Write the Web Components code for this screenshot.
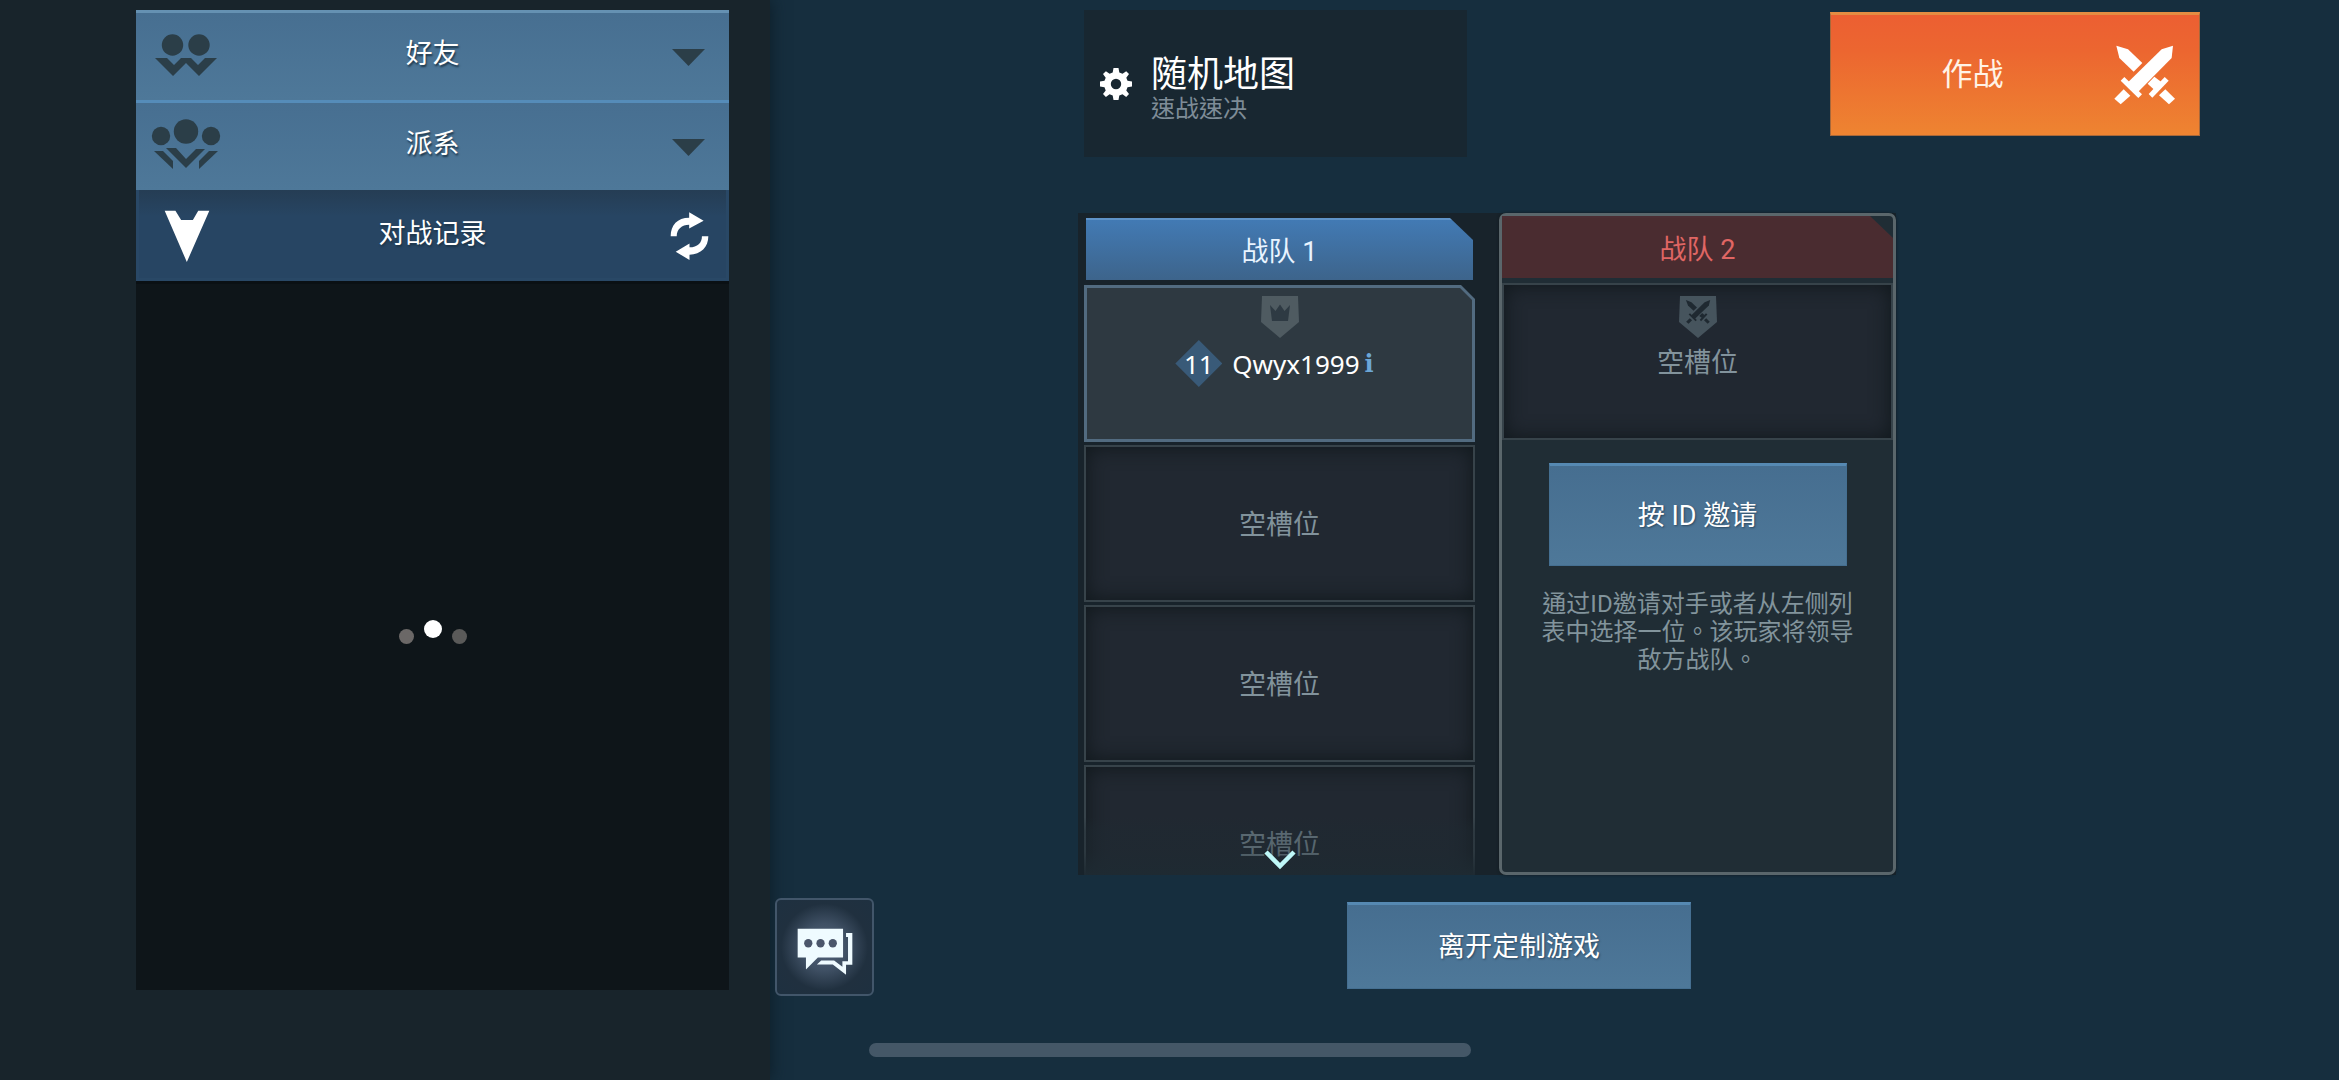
<!DOCTYPE html>
<html lang="zh-Hant">
<head>
<meta charset="utf-8">
<title>定制游戏</title>
<style>
html, body { margin: 0; height: 100%; }
body { background: #162e3e; color: #fff; font-family: Roboto, "Noto Sans CJK TC", sans-serif; font-size: 27px; line-height: 36px; overflow: hidden; }
</style>
</head>
<body>
<lobby-app></lobby-app>
<script>
const icons = {
  friends: ['17 28 68 44', 68, '<circle cx="37.5" cy="40" r="10.7"/><circle cx="64" cy="40" r="10.7"/><path d="M20 53H32L39 60L46 53H56L63 60L70 53H82L64 71L51 58L38 71Z"/>'],
  clan: ['16 113 70 51', 70, '<circle cx="26" cy="130" r="9.2"/><circle cx="51" cy="125.500" r="12.200"/><circle cx="76" cy="130" r="9.2"/><path d="M31 142H41L51 153L61 143H70L51 162Z"/><path d="M19 145H28L38 155V163Z"/><path d="M83 145H74L64 155V163Z"/>'],
  arrow: ['86 620 137 157', 46, '<path d="M88 622H120L137 650H172L188 622H221L154 775Z"/>'],
  refresh: ['60 66 116 144', 39, '<path d="M62 138C62 105 82 83 117 83V67L160 92L117 115V104C95 104 80 118 80 138Z"/><path d="M174 138C174 170 152 192 118 193V209L77 184L118 160V171C142 171 155 158 155 138Z"/>'],
  down: ['0 0 33 17', 33, '<path d="M0 0H33L16.500 17Z"/>'],
  swords: ['56 45 183 179', 61, '<path d="M233 47L229 84L128 186L98 157L199 58Z"/><path d="M76 152L87 141L140 193L129 204Z"/><path d="M85 178L105 197L76 223L57 206Z"/><path d="M63 47L98 58L141 99L115 125L72 84Z"/><path d="M208 141L220 152L171 203L160 192Z"/><path d="M157 161L177 140L203 160L180 182Z"/><path d="M210 178L239 206L221 223L191 196Z"/>'],
  gear: ['0 0 32 32', 32, '<path fill-rule="evenodd" d="M13.500 0H18.500L19.300 4.500L22.500 5.800L26.200 3.200L29 6L26.300 9.700L27.500 12.800L32 13.500V18.500L27.500 19.300L26.300 22.400L29 26L26.200 29L22.500 26.300L19.300 27.500L18.500 32H13.500L12.700 27.500L9.600 26.300L5.900 29L3 26L5.700 22.400L4.500 19.300L0 18.500V13.500L4.500 12.800L5.700 9.700L3 6L5.900 3.200L9.600 5.800L12.700 4.500ZM16 10.800A5.200 5.200 0 1 0 16 21.200A5.200 5.200 0 1 0 16 10.800Z"/>'],
  chat: ['110 135 169 143', 56, '<path d="M112 137H249V224H173L137 260V224H112Z"/><path d="M258 150H277V246H258V276L218 245H170L183 233H222L247 252V235H264V162H258Z"/><g fill="#4b566b"><circle cx="144" cy="181" r="12.500"/><circle cx="181" cy="181" r="12.500"/><circle cx="218" cy="181" r="12.500"/></g>'],
  chevron: ['0 0 32 20', 32, '<path d="M2 2L16 16L30 2" fill="none" stroke="#bff8f8" stroke-width="4.500"/>'],
  crown: ['0 0 40 43', 40, '<path d="M2 0H38L39 26L20 42L1 26Z"/><path fill="#2e3a43" d="M10 9L15.500 15L20 8.500L24.500 15L30 9L28 25H12Z"/>'],
  duel: ['0 0 40 43', 40, '<path d="M2 0H38L39 26L20 42L1 26Z"/><g fill="#1f2931" transform="translate(.500 -1.500) scale(.132)"><path d="M240 42L230 83L125 183L98 157L198 58Z"/><path d="M77 151L87 142L139 193L129 203Z"/><path d="M85 180L103 196L76 222L58 206Z"/><path d="M56 42L98 58L140 99L114 124L72 84Z"/><path d="M208 142L219 152L171 202L161 192Z"/><path d="M157 162L179 140L199 157L178 178Z"/><path d="M210 180L237 206L221 222L193 196Z"/></g>']
};

function define(name, css, html) {
  customElements.define(name, class extends HTMLElement {
    constructor() {
      super();
      this.attachShadow({ mode: 'open' }).innerHTML = `<style>
        * { box-sizing: border-box; }
        button { margin: 0; padding: 0; border: 0; font: inherit; color: inherit; background: none; cursor: pointer; }
        ${css}</style>${html}`;
    }
  });
}

customElements.define('game-icon', class extends HTMLElement {
  connectedCallback() {
    if (this.shadowRoot) return;
    const [box, width, shape] = icons[this.getAttribute('name')];
    this.attachShadow({ mode: 'open' }).innerHTML =
      `<style>:host{display:block;flex:none} svg{display:block;fill:currentColor}</style>
       <svg width="${width}" viewBox="${box}" aria-hidden="true">${shape}</svg>`;
  }
});

define('side-row', `
  :host { display: block; }
  button { display: grid; grid-template-columns: 100px 1fr 100px; align-items: center; width: 100%; height: 90px;
    background: linear-gradient(#476f91, #4e7899); border-top: 3px solid #558cb9; text-shadow: 1px 2px 2px #1d3548; }
  :host([first]) button { border-top-color: #6591b2; }
  :host([open]) button { height: 91px; border: 3px solid #294866; border-top: 0; background: linear-gradient(#253d54, #274563 30%, #274563); }
  ::slotted([slot=lead]) { justify-self: center; color: #2b3e48; margin-bottom: 4px; }
  ::slotted([slot=end]) { justify-self: center; color: #2b3e48; margin-left: 18px; margin-top: 2px; }
  :host([open]) ::slotted(game-icon) { color: #fff; margin-top: 5px; margin-bottom: 0; }
  :host([open]) ::slotted([slot=lead]) { margin-right: 4px; }
  :host([open]) ::slotted([slot=end]) { margin-left: 26px; }
  span { margin-bottom: 6px; }
  :host([open]) span { margin-bottom: 0; }
`, '<button type="button"><slot name="lead"></slot><span><slot></slot></span><slot name="end"></slot></button>');

define('loading-dots', `
  :host { display: flex; gap: 10px; align-items: center; justify-content: center; }
  i { width: 15px; height: 15px; border-radius: 50%; background: #6b6867; margin-top: 14px; }
  i:nth-of-type(2) { width: 18px; height: 18px; background: #fff; margin-top: 0; }
  i:nth-of-type(3) { background: #5a5a59; }
`, '<i></i><i></i><i></i>');

define('social-panel', `
  :host { display: flex; flex-direction: column; flex: 0 0 770px; padding: 10px 41px 90px 136px; background: #18242b; box-shadow: 0 0 16px #0c1c26; }
  .list { flex: 1; display: grid; place-items: center; background: #0e1519; padding-bottom: 16px; border-top: 3px solid #0a1014; }
`, `
  <side-row first><game-icon slot="lead" name="friends"></game-icon>好友<game-icon slot="end" name="down"></game-icon></side-row>
  <side-row><game-icon slot="lead" name="clan"></game-icon>派系<game-icon slot="end" name="down"></game-icon></side-row>
  <side-row open><game-icon slot="lead" name="arrow"></game-icon>对战记录<game-icon slot="end" name="refresh"></game-icon></side-row>
  <div class="list"><loading-dots></loading-dots></div>`);

define('map-card', `
  :host { display: block; width: 383px; height: 147px; }
  button { display: flex; align-items: center; gap: 19px; width: 100%; height: 100%; padding: 0 16px; background: #182731; text-align: left; }
  span { padding-top: 10px; }
  strong, small { display: block; font-weight: 400; }
  strong { font-size: 36px; line-height: 40px; }
  small { font-size: 24px; line-height: 28px; color: #7e8c97; }
`, '<button type="button"><game-icon name="gear"></game-icon><span><strong>随机地图</strong><small>速战速决</small></span></button>');

define('battle-button', `
  :host { display: block; width: 370px; height: 124px; margin-top: 2px; }
  button { display: flex; align-items: center; width: 100%; height: 100%; padding-right: 24px; font-size: 31px;
    border: 1px solid #a8683a; border-top: 3px solid #e48c42; background: linear-gradient(#ec5f32, #ec6630 30%, #ee8431); }
  span { flex: 1; color: #fff3e6; }
`, '<button type="button"><span><slot></slot></span><game-icon name="swords"></game-icon></button>');

define('blue-button', `
  :host { display: block; }
  button { width: 100%; height: 100%; background: linear-gradient(#466e90, #4e7899); border: 1px solid #456f91; border-top: 3px solid #5689b2; text-shadow: 1px 1px 2px #2b4860; }
`, '<button type="button"><slot></slot></button>');

define('team-slot', `
  :host { display: block; flex: 0 0 157px; }
  button { display: grid; width: 100%; height: 100%; border: 2px solid #37434a; background: #212831; box-shadow: inset 0 0 20px #10171b; color: #82939c; }
  slot { display: block; }
  .badge, .text { grid-area: 1 / 1; z-index: 1; }
  .badge { align-self: start; justify-self: center; margin-top: 11px; color: #46545d; }
  .text { place-self: center; padding-top: 2px; }
  :host([player]) button { color: #fff; background: #526b80; border: 0; box-shadow: none; padding: 3px;
    clip-path: polygon(0 0, calc(100% - 14px) 0, 100% 14px, 100% 100%, 0 100%); }
  .fill { display: none; }
  :host([player]) .badge { margin-top: 8px; color: #4f5b61; }
  :host([player]) .text { padding-top: 0; }
  :host([player]) .fill { display: block; grid-area: 1 / 1; background: #2e3941; clip-path: polygon(0 0, calc(100% - 12px) 0, 100% 12px, 100% 100%, 0 100%); }
`, '<button type="button"><span class="fill"></span><span class="badge"><slot name="badge"></slot></span><span class="text"><slot>空槽位</slot></span></button>');

define('player-name', `
  :host { display: flex; align-items: center; margin-right: 10px; font-family: "Noto Sans", sans-serif; font-size: 26px; }
  .level { width: 47px; height: 47px; display: grid; place-items: center; margin-right: 10px; background: #395a78; clip-path: polygon(50% 0, 100% 50%, 50% 100%, 0 50%); }
  b { color: #6ca6d6; font: bold 24px/36px "DejaVu Serif", serif; margin-left: 5px; }
`, '<span class="level">11</span><span><slot></slot></span><b>i</b>');

define('team-header', `
  :host { display: block; flex: none; --edge: #5f93c8; --a: #427ab4; --b: #3d648b; color: #e9f4ff; height: 62px; }
  :host([enemy]) { --edge: #4b2d33; --a: #4a2c30; --b: #4a2c30; color: #e06664; }
  h2 { margin: 0; height: 100%; padding-top: 3px; font-size: 27px; font-weight: 400; display: grid; place-items: center; background: linear-gradient(var(--a), var(--b)); border-top: 2px solid var(--edge);
    clip-path: polygon(0 0, calc(100% - 23px) 0, 100% 22px, 100% 100%, 0 100%); }
`, '<h2><span><slot></slot></span></h2>');

define('home-team', `
  :host { position: relative; display: flex; flex-direction: column; gap: 3px; width: 391px; overflow: hidden; padding-top: 5px; }
  team-header { margin: 0 2px 2px; }
  .more { position: absolute; z-index: 2; inset: auto 0 0 0; height: 58px; display: grid; justify-content: center; align-items: end; padding-bottom: 5px;
    background: linear-gradient(#1e2a3200, #1e2a3268 25%, #1e2a3270 60%, #1e2a32); width: 100%; }
`, `
  <team-header>战队 1</team-header>
  <team-slot player><game-icon slot="badge" name="crown"></game-icon><player-name>Qwyx1999</player-name></team-slot>
  <team-slot></team-slot><team-slot></team-slot><team-slot></team-slot>
  <button type="button" class="more" aria-label="更多"><game-icon name="chevron"></game-icon></button>`);

define('enemy-team', `
  :host { display: flex; flex-direction: column; width: 397px; border: 3px solid #5a666b; border-radius: 7px; background: #202d35; box-shadow: 0 0 3px #11191e; }
  team-slot { margin-top: 5px; }
  blue-button { width: 298px; height: 103px; margin: 23px auto 24px; }
  p { margin: 0 38px; font-size: 24px; line-height: 28px; text-align: center; color: #82949c; }
`, `
  <team-header enemy>战队 2</team-header>
  <team-slot><game-icon slot="badge" name="duel"></game-icon></team-slot>
  <blue-button>按 ID 邀请</blue-button>
  <p>通过ID邀请对手或者从左侧列表中选择一位。该玩家将领导敌方战队。</p>`);

define('chat-button', `
  :host { display: block; width: 99px; height: 98px; }
  button { display: grid; place-items: center; width: 100%; height: 100%; padding-top: 10px; color: #effbff; border: 2px solid #42566a; border-radius: 6px;
    background: radial-gradient(circle at 50% 50%, #53627a 0, #3f5064 35%, #20303f 65%, #1e3040); }
`, '<button type="button" aria-label="聊天"><game-icon name="chat"></game-icon></button>');

define('lobby-app', `
  :host { display: flex; height: 100vh; }
  main { flex: 1; display: flex; flex-direction: column; padding: 10px 0 84px 5px; min-width: 0; }
  header { display: flex; justify-content: space-between; padding: 0 139px 0 309px; margin-bottom: 56px; }
  .teams { flex: 1; min-height: 0; display: flex; justify-content: space-between; width: 818px; margin-left: 303px; padding-left: 6px; background: #18232b; }
  footer { display: flex; gap: 473px; margin-top: 23px; }
  footer blue-button { width: 344px; height: 87px; margin-top: 4px; }
  .home { position: fixed; bottom: 23px; left: 50%; width: 602px; height: 14px; margin-left: -301px; border-radius: 7px; background: #445767; }
`, `
  <social-panel></social-panel>
  <main>
    <header><map-card></map-card><battle-button>作战</battle-button></header>
    <div class="teams"><home-team></home-team><enemy-team></enemy-team></div>
    <footer><chat-button></chat-button><blue-button>离开定制游戏</blue-button></footer>
  </main>
  <div class="home"></div>`);
</script>
</body>
</html>
